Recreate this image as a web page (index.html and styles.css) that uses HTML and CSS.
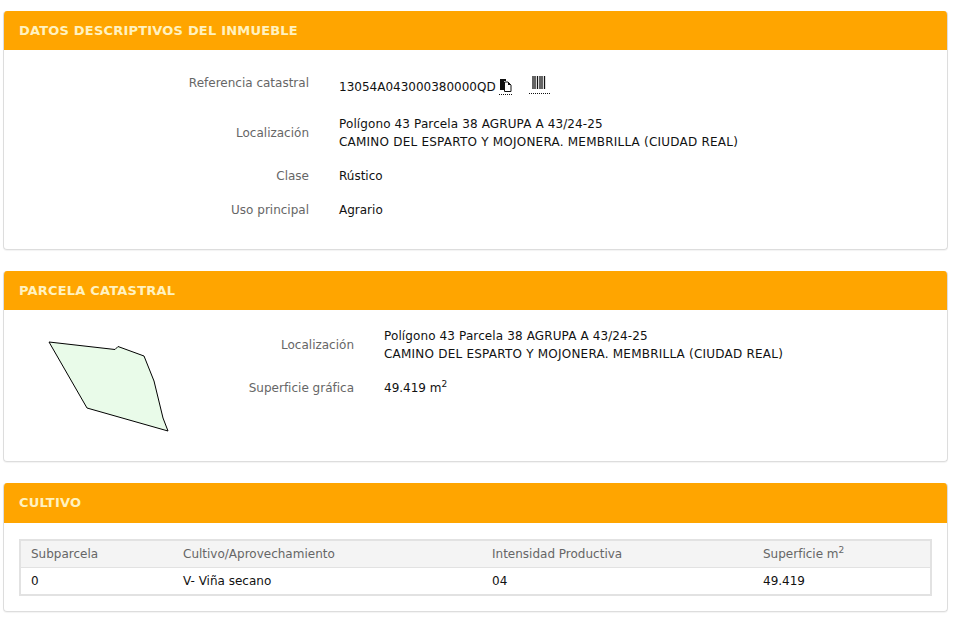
FILE: index.html
```html
<!DOCTYPE html>
<html lang="es">
<head>
  <meta charset="UTF-8">
  <title>Datos descriptivos del inmueble</title>
  <link rel="stylesheet" href="styles.css">
</head>
<body>
  <section class="panel panel-first">
    <h2 class="panel-heading">DATOS DESCRIPTIVOS DEL INMUEBLE</h2>
    <div class="panel-body">
      <div class="data-rows">
        <div class="data-row row-ref">
          <span class="data-label">Referencia catastral</span>
          <span class="data-value ref-value">
            13054A043000380000QD
            <a class="icon-link copy-link" href="#" aria-label="Copiar">
              <svg width="13" height="13" viewBox="0 0 13 13">
                <path d="M1 0h6v2h-2v9H1z" fill="#111"/>
                <path d="M5.500 3H9l3 3v6.500H5.500z" fill="#fff" stroke="#111"/>
                <path d="M9 3v3h3z" fill="#111"/>
              </svg>
            </a>
            <a class="icon-link barcode-link" href="#" aria-label="Código de barras">
              <svg width="15" height="13" viewBox="0 0 15 13">
                <path d="M1 0v13M3 0v13M5.500 0v13M8 0v13M10 0v13M12.500 0v13" stroke="#111" stroke-width="1.300"/>
              </svg>
            </a>
          </span>
        </div>
        <div class="data-row">
          <span class="data-label">Localización</span>
          <span class="data-value"><span class="addr-line">Polígono 43 Parcela 38 AGRUPA A 43/24-25</span><br><span class="addr-caps">CAMINO DEL ESPARTO Y MOJONERA. MEMBRILLA (CIUDAD REAL)</span></span>
        </div>
        <div class="data-row">
          <span class="data-label">Clase</span>
          <span class="data-value">Rústico</span>
        </div>
        <div class="data-row">
          <span class="data-label">Uso principal</span>
          <span class="data-value">Agrario</span>
        </div>
      </div>
    </div>
  </section>

  <section class="panel panel-parcel">
    <h2 class="panel-heading">PARCELA CATASTRAL</h2>
    <div class="panel-body parcel-body">
      <svg class="parcel-plot" width="125" height="95" viewBox="0 0 125 95">
        <polygon points="1,1 67,8.500 70,5.500 96,15 106,40 115,77 120,90 39,67" fill="#e9fbe9" stroke="#000" stroke-width="1"/>
      </svg>
      <div class="data-rows parcel-rows">
        <div class="data-row">
          <span class="data-label">Localización</span>
          <span class="data-value"><span class="addr-line">Polígono 43 Parcela 38 AGRUPA A 43/24-25</span><br><span class="addr-caps">CAMINO DEL ESPARTO Y MOJONERA. MEMBRILLA (CIUDAD REAL)</span></span>
        </div>
        <div class="data-row">
          <span class="data-label">Superficie gráfica</span>
          <span class="data-value">49.419 m<sup>2</sup></span>
        </div>
      </div>
    </div>
  </section>

  <section class="panel panel-crop">
    <h2 class="panel-heading">CULTIVO</h2>
    <div class="panel-body crop-body">
      <table class="crop-table">
        <thead>
          <tr>
            <th class="col-sub">Subparcela</th>
            <th class="col-crop">Cultivo/Aprovechamiento</th>
            <th class="col-int">Intensidad Productiva</th>
            <th>Superficie m<sup>2</sup></th>
          </tr>
        </thead>
        <tbody>
          <tr>
            <td>0</td>
            <td>V- Viña secano</td>
            <td>04</td>
            <td>49.419</td>
          </tr>
        </tbody>
      </table>
    </div>
  </section>
</body>
</html>
```

FILE: styles.css
```css
/* General Reset */
* {
  margin: 0;
  padding: 0;
  box-sizing: border-box;
}

body {
  font-family: "DejaVu Sans", Verdana, sans-serif;
  font-size: 12px;
  line-height: 18px;
  color: #111;
  background-color: #fff;
  padding: 11px 6px 0 3px;
  overflow: hidden;
}

/* Panels */
.panel {
  border: 1px solid #ddd;
  border-top: none;
  border-radius: 4px;
  margin-bottom: 21px;
  box-shadow: 0 1px 1px rgba(0, 0, 0, 0.05);
  overflow: hidden;
}

.panel-heading {
  height: 39px;
  padding-left: 15px;
  font-size: 13px;
  font-weight: bold;
  letter-spacing: 0.2px;
  line-height: 40px;
  color: #fff2c0;
  background-color: #ffa500;
}

.panel-crop .panel-heading {
  height: 40px;
}

.panel-first .panel-body {
  height: 199px;
  padding-top: 25px;
}

/* Label / value rows */
.data-rows {
  display: flex;
  flex-direction: column;
  gap: 16px;
}

.data-row {
  display: grid;
  grid-template-columns: 305px 1fr;
  column-gap: 30px;
  align-items: center;
}

.data-label {
  text-align: right;
  color: #666;
}

.addr-line {
  letter-spacing: 0.12px;
}

.addr-caps {
  letter-spacing: 0.22px;
}

.row-ref {
  height: 24px;
}

.row-ref .data-label {
  align-self: start;
  margin-top: -1px;
}

.ref-value {
  display: flex;
  align-items: center;
}

.icon-link {
  display: block;
  height: 16px;
  border-bottom: 1px dotted #111;
}

.icon-link svg {
  display: block;
}

.copy-link {
  margin-left: 3px;
}

.barcode-link {
  width: 21px;
  height: 18px;
  margin-top: -4px;
  margin-left: 17px;
  padding-left: 3px;
}

sup {
  font-size: 9px;
  line-height: 0;
}

/* Parcel */
.parcel-body {
  display: flex;
  height: 151px;
  padding-top: 17px;
}

.parcel-plot {
  flex: none;
  margin: 14px 0 0 44px;
}

.parcel-rows {
  flex: 1;
  margin-left: 21px;
}

.parcel-rows .data-row {
  grid-template-columns: 160px 1fr;
}

/* Crop table */
.crop-body {
  padding: 16px 15px 15px 15px;
}

.crop-table {
  width: 100%;
  border-collapse: collapse;
  border: 2px solid #e2e2e2;
  table-layout: fixed;
}

.crop-table th,
.crop-table td {
  height: 27px;
  padding: 0 10px;
  text-align: left;
  font-weight: normal;
}

.crop-table td {
  height: 28px;
}

.crop-table th {
  color: #666;
  background-color: #f4f4f4;
  border-bottom: 1px solid #e2e2e2;
}

.col-sub {
  width: 153px;
}

.col-crop {
  width: 309px;
}

.col-int {
  width: 271px;
}
```
